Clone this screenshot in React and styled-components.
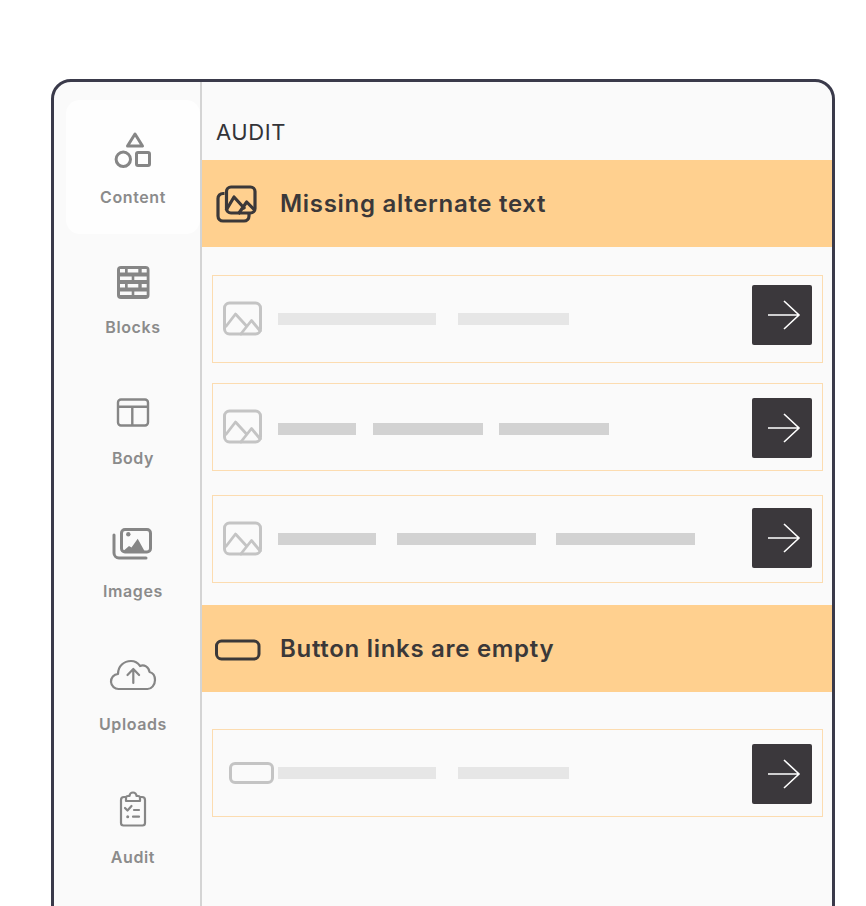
import React from 'react';
import styled, { createGlobalStyle } from 'styled-components';

const GlobalStyle = createGlobalStyle`
  html, body {
    margin: 0;
    padding: 0;
    height: 906px;
    overflow: hidden;
    background: #fff;
    font-family: Inter, "Noto Sans", sans-serif;
  }
`;

const Page = styled.div`
  height: 906px;
  overflow: hidden;
  padding: 79px 31px 0 51px;
  box-sizing: border-box;
`;

const Frame = styled.div`
  display: flex;
  height: 900px;
  box-sizing: border-box;
  border: 3px solid #3a3a4a;
  border-radius: 20px;
  background: #fafafa;
  overflow: hidden;
`;

const Sidebar = styled.nav`
  width: 148px;
  flex: none;
  box-sizing: border-box;
  padding: 18px 0 0 12px;
  border-right: 2px solid #d4d4d4;
`;

const NavItem = styled.div`
  display: flex;
  flex-direction: column;
  align-items: center;
  box-sizing: border-box;
  height: ${(p) => p.$height}px;
  width: 134px;
  padding-top: 26px;
  border-radius: 14px;
  background: ${(p) => (p.$active ? '#fefefe' : 'transparent')};
`;

const NavIcon = styled.svg`
  width: 48px;
  height: 48px;
  flex: none;
  display: block;
`;

const NavLabel = styled.span`
  margin-top: ${(p) => p.$gap}px;
  font-size: 16px;
  line-height: 20px;
  letter-spacing: 0.6px;
  font-weight: 600;
  color: #8b8b8b;
`;

const Main = styled.main`
  flex: 1;
  min-width: 0;
  display: flex;
  flex-direction: column;
`;

const Heading = styled.h1`
  margin: 0;
  height: 78px;
  box-sizing: border-box;
  padding: 35px 0 0 14px;
  font-size: 22px;
  line-height: 30px;
  letter-spacing: 0.6px;
  font-weight: 400;
  color: #333338;
`;

const Banner = styled.div`
  display: flex;
  align-items: center;
  height: 87px;
  flex: none;
  margin-top: ${(p) => p.$top || 0}px;
  background: #ffd08f;
`;

const BannerIcon = styled.svg`
  width: 48px;
  height: 48px;
  flex: none;
  margin-left: 12px;
  display: block;
`;

const BannerTitle = styled.h2`
  margin: 0 0 0 18px;
  font-size: 24px;
  line-height: 32px;
  letter-spacing: 0.7px;
  font-weight: 600;
  color: #3b3839;
`;

const Row = styled.div`
  display: flex;
  align-items: center;
  flex: none;
  box-sizing: border-box;
  height: 88px;
  width: 611px;
  margin: ${(p) => p.$top}px 0 0 10px;
  padding: 0 10px;
  border: 1px solid #fcdcb0;
`;

const RowIcon = styled.svg`
  width: 40px;
  height: 40px;
  flex: none;
  display: block;
  margin-right: 15px;
`;

const ButtonGlyph = styled.span`
  flex: none;
  box-sizing: border-box;
  width: 45px;
  height: 22px;
  margin: 0 4px 0 6px;
  border: 3px solid #c4c4c4;
  border-radius: 6px;
`;

const Bars = styled.div`
  display: flex;
  flex: 1;
  gap: ${(p) => p.$gap}px;
  margin-top: ${(p) => p.$drop || 0}px;
`;

const Bar = styled.span`
  display: block;
  height: 12px;
  width: ${(p) => p.$width}px;
  background: ${(p) => (p.$dark ? '#d2d2d2' : '#e6e6e6')};
`;

const Arrow = styled.div`
  flex: none;
  display: flex;
  align-items: center;
  justify-content: center;
  width: 60px;
  height: 60px;
  margin-top: ${(p) => p.$shift}px;
  border-radius: 2px;
  background: #3b383c;
`;

const ArrowGlyph = styled.svg`
  margin-left: 4px;
  display: block;
`;

const ArrowIcon = () => (
  <ArrowGlyph width="34" height="30" viewBox="0 0 34 30" fill="none" stroke="#fff" strokeWidth="1.6">
    <path d="M1 15h31M17 1l15 14-15 14" />
  </ArrowGlyph>
);

const PictureIcon = () => (
  <RowIcon viewBox="0 0 40 40" fill="none" stroke="#c4c4c4" strokeWidth="3" strokeLinejoin="round">
    <rect x="1.500" y="4" width="36" height="31" rx="5" />
    <path d="M2.500 28l10-13 11 12M17 36l11.500-14.500L38 33" strokeWidth="2.8" />
  </RowIcon>
);

const navItems = [
  {
    label: 'Content',
    height: 134,
    gap: 13,
    active: true,
    icon: (
      <g fill="none" stroke="#868686" strokeWidth="3">
        <path d="M26 8l7.500 12h-15z" strokeLinejoin="round" />
        <circle cx="14.3" cy="33.3" r="7.2" />
        <rect x="27.5" y="26.5" width="13" height="13" rx="1.5" />
      </g>
    ),
  },
  {
    label: 'Blocks',
    height: 130,
    gap: 9,
    icon: (
      <g>
        <rect x="8" y="6" width="32.5" height="33" rx="4" fill="#868686" />
        <path
          d="M11 10.700h5M18.700 10.700h10.600M32.700 10.700h5M11 18.300h11.700M25.300 18.300h12.400M11 25.700h5M18.700 25.700h10.600M32.700 25.700h5M11 33.300h11.700M25.300 33.300h12.400"
          stroke="#fafafa"
          strokeWidth="3.4"
          fill="none"
        />
      </g>
    ),
  },
  {
    label: 'Body',
    height: 131,
    gap: 10,
    icon: (
      <g fill="none" stroke="#868686" strokeWidth="2.4">
        <rect x="9" y="9.500" width="30" height="26" rx="3" />
        <path d="M9 16.700h30M23.300 16.700v18.800" />
      </g>
    ),
  },
  {
    label: 'Images',
    height: 133,
    gap: 12,
    icon: (
      <g fill="none" stroke="#868686" strokeWidth="3">
        <rect x="12.500" y="8.500" width="29" height="22.500" rx="3.500" />
        <path d="M5 14v18a5 5 0 0 0 5 5h27" strokeLinecap="round" />
        <circle cx="19.300" cy="13.300" r="2.200" fill="#868686" stroke="none" />
        <path d="M14.300 30l5.700-5 2.500 1.500 6.200-8.800 6.800 12.300z" fill="#868686" stroke="none" />
      </g>
    ),
  },
  {
    label: 'Uploads',
    height: 133,
    gap: 12,
    icon: (
      <g fill="none" stroke="#868686" strokeWidth="2.2" strokeLinecap="round" strokeLinejoin="round">
        <path d="M10 35a7.500 7.500 0 0 1-1-15c0-8 6-13 13-13 4 0 7 2 9 5 4-2 9 1 9.500 6 4 1 5.500 4 5.500 8 0 5-3.500 9-7.500 9z" />
        <path d="M24.300 29V15.500M18.500 21l5.800-6 5.800 6" />
      </g>
    ),
  },
  {
    label: 'Audit',
    height: 133,
    gap: 12,
    icon: (
      <g fill="none" stroke="#868686" strokeWidth="2.2" strokeLinejoin="round">
        <path d="M17 10h-2a3 3 0 0 0-3 3v23a2.500 2.500 0 0 0 2.500 2.500h19a2.500 2.500 0 0 0 2.500-2.500V13a3 3 0 0 0-3-3h-2" />
        <path d="M17 14v-3.500a2 2 0 0 1 2-1.500h1.500a3.500 3.500 0 0 1 7 0H29a2 2 0 0 1 2 1.500V14z" />
        <path d="M16 21l2.500 2.500 4-4.500M25 23h5M24 29.700h6" strokeLinecap="round" />
        <circle cx="18.700" cy="29.700" r="1.500" fill="#868686" stroke="none" />
      </g>
    ),
  },
];

const rows = [
  { top: 28, shift: -8, gap: 22, bars: [158, 111] },
  { top: 20, shift: 1, gap: 16.5, drop: 3, dark: true, bars: [78, 110, 110] },
  { top: 24, shift: -2, gap: 20.5, dark: true, bars: [98, 139, 139] },
];

const AuditRow = ({ top, shift, gap, drop, dark, bars, glyph }) => (
  <Row $top={top}>
    {glyph || <PictureIcon />}
    <Bars $gap={gap} $drop={drop}>
      {bars.map((w, i) => (
        <Bar key={i} $width={w} $dark={dark} />
      ))}
    </Bars>
    <Arrow $shift={shift}>
      <ArrowIcon />
    </Arrow>
  </Row>
);

const App = () => (
  <Page>
    <GlobalStyle />
    <Frame>
      <Sidebar>
        {navItems.map((item) => (
          <NavItem key={item.label} $height={item.height} $active={item.active}>
            <NavIcon viewBox="0 0 48 48">{item.icon}</NavIcon>
            <NavLabel $gap={item.gap}>{item.label}</NavLabel>
          </NavItem>
        ))}
      </Sidebar>
      <Main>
        <Heading>AUDIT</Heading>
        <Banner>
          <BannerIcon viewBox="0 0 48 48" fill="none" stroke="#3b3839" strokeWidth="3.2" strokeLinejoin="round">
            <rect x="12.500" y="7" width="28.500" height="26" rx="4.500" />
            <path d="M10.500 13.500H9a5 5 0 0 0-5 5v17.500a5 5 0 0 0 5 5h21a5 5 0 0 0 5-5v-3" />
            <path d="M12 30.500l8-13.500 11 12M24.300 34l8.400-12 8.300 8.500" />
          </BannerIcon>
          <BannerTitle>Missing alternate text</BannerTitle>
        </Banner>
        {rows.map((row, i) => (
          <AuditRow key={i} {...row} />
        ))}
        <Banner $top={22}>
          <BannerIcon viewBox="0 0 48 48" fill="none" stroke="#3b3839" strokeWidth="3">
            <rect x="2.500" y="16" width="42.500" height="18" rx="5" />
          </BannerIcon>
          <BannerTitle>Button links are empty</BannerTitle>
        </Banner>
        <AuditRow top={37} shift={2} gap={22} bars={[158, 111]} glyph={<ButtonGlyph />} />
      </Main>
    </Frame>
  </Page>
);

export default App;
